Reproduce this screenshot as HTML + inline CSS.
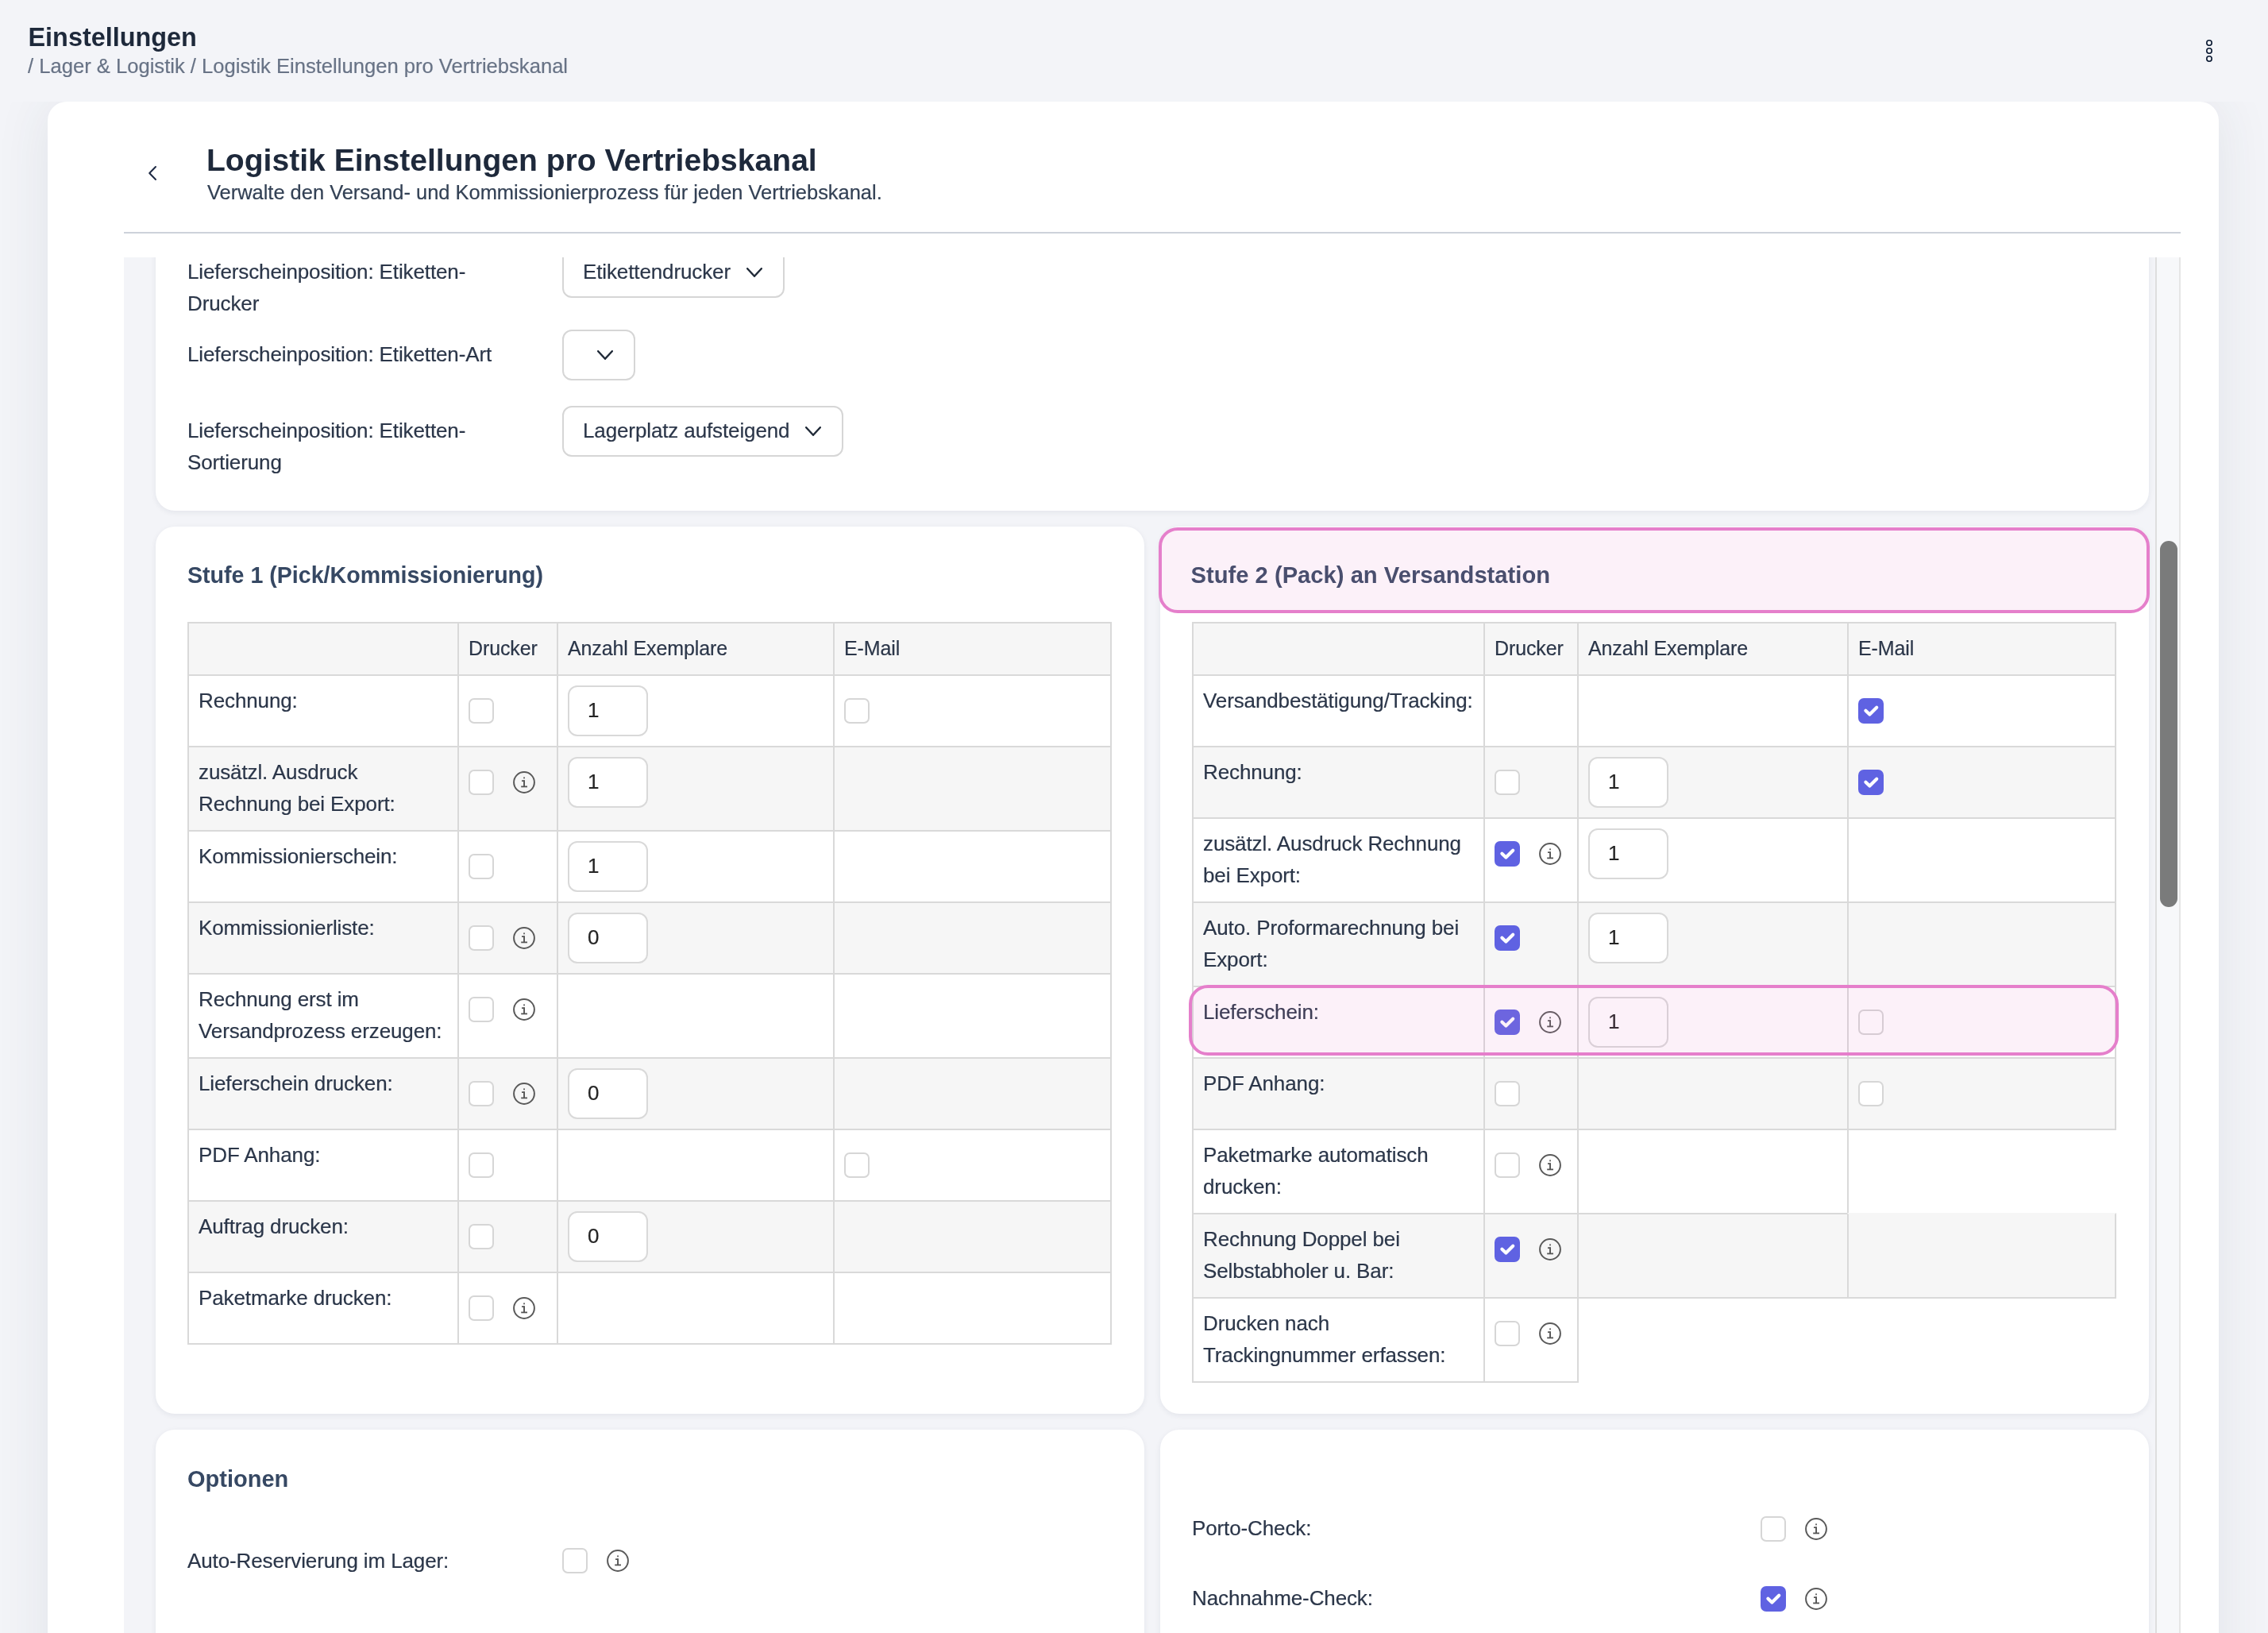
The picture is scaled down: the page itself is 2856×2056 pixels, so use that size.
<!DOCTYPE html>
<html><head><meta charset="utf-8"><title>Logistik Einstellungen</title>
<style>
html,body{margin:0;padding:0}
body{width:2856px;height:2056px;overflow:hidden;position:relative;background:#f3f4f8;font-family:"Liberation Sans", sans-serif}
.t{position:absolute;white-space:nowrap}
.a{position:absolute;display:block}
</style></head><body><div id="root" style="position:absolute;left:0;top:0;width:2856px;height:2056px;overflow:hidden;background:#f3f4f8;will-change:transform">
<div class="t" style="left:35.5px;top:25.00px;font-size:32.4px;line-height:44px;font-weight:700;color:#1e293b;">Einstellungen</div><div class="t" style="left:35px;top:65.00px;font-size:25.6px;line-height:36px;font-weight:400;color:#687386;-webkit-text-stroke:0.2px currentColor;letter-spacing:0px;">/ Lager &amp; Logistik / Logistik Einstellungen pro Vertriebskanal</div><svg class="a" style="left:2772px;top:44px" width="20" height="40" viewBox="0 0 20 40"><circle cx="10" cy="10" r="3.2" fill="none" stroke="#0b1a33" stroke-width="1.6"/><circle cx="10" cy="20" r="3.2" fill="none" stroke="#0b1a33" stroke-width="1.6"/><circle cx="10" cy="30" r="3.2" fill="none" stroke="#0b1a33" stroke-width="1.6"/></svg><div style="position:absolute;left:0;top:128px;width:2856px;height:1928px;overflow:hidden"><div style="position:absolute;left:60px;top:0;width:2734px;height:2400px;background:#fff;border-radius:24px;box-shadow:0 0 70px rgba(45,65,75,0.09)"></div></div><svg class="a" style="left:184px;top:206px" width="16" height="24" viewBox="0 0 16 24"><polyline points="12,4 4.2,12 12,20" fill="none" stroke="#1e2a44" stroke-width="2" stroke-linecap="round" stroke-linejoin="round"/></svg><div class="t" style="left:260px;top:176.50px;font-size:39.1px;line-height:50px;font-weight:700;color:#1e293b;">Logistik Einstellungen pro Vertriebskanal</div><div class="t" style="left:261px;top:224.00px;font-size:25.5px;line-height:36px;font-weight:400;color:#334155;-webkit-text-stroke:0.2px currentColor;letter-spacing:-0.03px;">Verwalte den Versand- und Kommissionierprozess für jeden Vertriebskanal.</div><div style="position:absolute;left:156px;top:292px;width:2590px;height:2px;background:#cdd2da"></div><div style="position:absolute;left:156px;top:324px;width:2590px;height:1732px;overflow:hidden;background:#f3f4f8"><div style="position:absolute;left:-156px;top:-324px;width:2856px;height:2056px"><div style="position:absolute;left:196px;top:200px;width:2510px;height:443px;background:#fff;border-radius:24px;box-shadow:0 2px 7px rgba(30,40,70,0.075)"></div><div style="position:absolute;left:196px;top:663px;width:1245px;height:1117px;background:#fff;border-radius:24px;box-shadow:0 2px 7px rgba(30,40,70,0.075)"></div><div style="position:absolute;left:1461px;top:663px;width:1245px;height:1117px;background:#fff;border-radius:24px;box-shadow:0 2px 7px rgba(30,40,70,0.075)"></div><div style="position:absolute;left:196px;top:1800px;width:1245px;height:600px;background:#fff;border-radius:24px;box-shadow:0 2px 7px rgba(30,40,70,0.075)"></div><div style="position:absolute;left:1461px;top:1800px;width:1245px;height:600px;background:#fff;border-radius:24px;box-shadow:0 2px 7px rgba(30,40,70,0.075)"></div><div class="t" style="left:236px;top:322.00px;font-size:26px;line-height:40px;font-weight:400;color:#2b3649;-webkit-text-stroke:0.2px currentColor;letter-spacing:-0.12px;">Lieferscheinposition: Etiketten-</div><div class="t" style="left:236px;top:362.00px;font-size:26px;line-height:40px;font-weight:400;color:#2b3649;-webkit-text-stroke:0.2px currentColor;letter-spacing:-0.12px;">Drucker</div><div style="position:absolute;left:708px;top:311px;width:280px;height:64px;box-sizing:border-box;border:2px solid #d6d6d6;border-radius:12px;background:#fff"></div><div class="t" style="left:734px;top:322.00px;font-size:26px;line-height:40px;font-weight:400;color:#2b3649;-webkit-text-stroke:0.2px currentColor;letter-spacing:-0.12px;">Etikettendrucker</div><svg class="a" style="left:940px;top:337px" width="20" height="12" viewBox="0 0 20 12"><polyline points="1.2,1.2 10.0,10.8 18.8,1.2" fill="none" stroke="#1f2937" stroke-width="2.4" stroke-linecap="round" stroke-linejoin="round"/></svg><div class="t" style="left:236px;top:426.00px;font-size:26px;line-height:40px;font-weight:400;color:#2b3649;-webkit-text-stroke:0.2px currentColor;letter-spacing:-0.12px;">Lieferscheinposition: Etiketten-Art</div><div style="position:absolute;left:708px;top:415px;width:92px;height:64px;box-sizing:border-box;border:2px solid #d6d6d6;border-radius:12px;background:#fff"></div><svg class="a" style="left:752px;top:441px" width="20" height="12" viewBox="0 0 20 12"><polyline points="1.2,1.2 10.0,10.8 18.8,1.2" fill="none" stroke="#1f2937" stroke-width="2.4" stroke-linecap="round" stroke-linejoin="round"/></svg><div class="t" style="left:236px;top:522.00px;font-size:26px;line-height:40px;font-weight:400;color:#2b3649;-webkit-text-stroke:0.2px currentColor;letter-spacing:-0.12px;">Lieferscheinposition: Etiketten-</div><div class="t" style="left:236px;top:562.00px;font-size:26px;line-height:40px;font-weight:400;color:#2b3649;-webkit-text-stroke:0.2px currentColor;letter-spacing:-0.12px;">Sortierung</div><div style="position:absolute;left:708px;top:511px;width:354px;height:64px;box-sizing:border-box;border:2px solid #d6d6d6;border-radius:12px;background:#fff"></div><div class="t" style="left:734px;top:522.00px;font-size:26px;line-height:40px;font-weight:400;color:#2b3649;-webkit-text-stroke:0.2px currentColor;letter-spacing:-0.12px;">Lagerplatz aufsteigend</div><svg class="a" style="left:1014px;top:537px" width="20" height="12" viewBox="0 0 20 12"><polyline points="1.2,1.2 10.0,10.8 18.8,1.2" fill="none" stroke="#1f2937" stroke-width="2.4" stroke-linecap="round" stroke-linejoin="round"/></svg><div class="t" style="left:236px;top:703.50px;font-size:28.6px;line-height:40px;font-weight:700;color:#364863;">Stufe 1 (Pick/Kommissionierung)</div><div style="position:absolute;left:236px;top:783px;width:342px;height:68px;box-sizing:border-box;border:2px solid #d9d9d9;background:#f6f6f6"></div><div style="position:absolute;left:576px;top:783px;width:127px;height:68px;box-sizing:border-box;border:2px solid #d9d9d9;background:#f6f6f6"></div><div style="position:absolute;left:701px;top:783px;width:350px;height:68px;box-sizing:border-box;border:2px solid #d9d9d9;background:#f6f6f6"></div><div style="position:absolute;left:1049px;top:783px;width:351px;height:68px;box-sizing:border-box;border:2px solid #d9d9d9;background:#f6f6f6"></div><div style="position:absolute;left:236px;top:849px;width:342px;height:92px;box-sizing:border-box;border:2px solid #d9d9d9;background:#fff"></div><div style="position:absolute;left:576px;top:849px;width:127px;height:92px;box-sizing:border-box;border:2px solid #d9d9d9;background:#fff"></div><div style="position:absolute;left:701px;top:849px;width:350px;height:92px;box-sizing:border-box;border:2px solid #d9d9d9;background:#fff"></div><div style="position:absolute;left:1049px;top:849px;width:351px;height:92px;box-sizing:border-box;border:2px solid #d9d9d9;background:#fff"></div><div style="position:absolute;left:236px;top:939px;width:342px;height:108px;box-sizing:border-box;border:2px solid #d9d9d9;background:#f6f6f6"></div><div style="position:absolute;left:576px;top:939px;width:127px;height:108px;box-sizing:border-box;border:2px solid #d9d9d9;background:#f6f6f6"></div><div style="position:absolute;left:701px;top:939px;width:350px;height:108px;box-sizing:border-box;border:2px solid #d9d9d9;background:#f6f6f6"></div><div style="position:absolute;left:1049px;top:939px;width:351px;height:108px;box-sizing:border-box;border:2px solid #d9d9d9;background:#f6f6f6"></div><div style="position:absolute;left:236px;top:1045px;width:342px;height:92px;box-sizing:border-box;border:2px solid #d9d9d9;background:#fff"></div><div style="position:absolute;left:576px;top:1045px;width:127px;height:92px;box-sizing:border-box;border:2px solid #d9d9d9;background:#fff"></div><div style="position:absolute;left:701px;top:1045px;width:350px;height:92px;box-sizing:border-box;border:2px solid #d9d9d9;background:#fff"></div><div style="position:absolute;left:1049px;top:1045px;width:351px;height:92px;box-sizing:border-box;border:2px solid #d9d9d9;background:#fff"></div><div style="position:absolute;left:236px;top:1135px;width:342px;height:92px;box-sizing:border-box;border:2px solid #d9d9d9;background:#f6f6f6"></div><div style="position:absolute;left:576px;top:1135px;width:127px;height:92px;box-sizing:border-box;border:2px solid #d9d9d9;background:#f6f6f6"></div><div style="position:absolute;left:701px;top:1135px;width:350px;height:92px;box-sizing:border-box;border:2px solid #d9d9d9;background:#f6f6f6"></div><div style="position:absolute;left:1049px;top:1135px;width:351px;height:92px;box-sizing:border-box;border:2px solid #d9d9d9;background:#f6f6f6"></div><div style="position:absolute;left:236px;top:1225px;width:342px;height:108px;box-sizing:border-box;border:2px solid #d9d9d9;background:#fff"></div><div style="position:absolute;left:576px;top:1225px;width:127px;height:108px;box-sizing:border-box;border:2px solid #d9d9d9;background:#fff"></div><div style="position:absolute;left:701px;top:1225px;width:350px;height:108px;box-sizing:border-box;border:2px solid #d9d9d9;background:#fff"></div><div style="position:absolute;left:1049px;top:1225px;width:351px;height:108px;box-sizing:border-box;border:2px solid #d9d9d9;background:#fff"></div><div style="position:absolute;left:236px;top:1331px;width:342px;height:92px;box-sizing:border-box;border:2px solid #d9d9d9;background:#f6f6f6"></div><div style="position:absolute;left:576px;top:1331px;width:127px;height:92px;box-sizing:border-box;border:2px solid #d9d9d9;background:#f6f6f6"></div><div style="position:absolute;left:701px;top:1331px;width:350px;height:92px;box-sizing:border-box;border:2px solid #d9d9d9;background:#f6f6f6"></div><div style="position:absolute;left:1049px;top:1331px;width:351px;height:92px;box-sizing:border-box;border:2px solid #d9d9d9;background:#f6f6f6"></div><div style="position:absolute;left:236px;top:1421px;width:342px;height:92px;box-sizing:border-box;border:2px solid #d9d9d9;background:#fff"></div><div style="position:absolute;left:576px;top:1421px;width:127px;height:92px;box-sizing:border-box;border:2px solid #d9d9d9;background:#fff"></div><div style="position:absolute;left:701px;top:1421px;width:350px;height:92px;box-sizing:border-box;border:2px solid #d9d9d9;background:#fff"></div><div style="position:absolute;left:1049px;top:1421px;width:351px;height:92px;box-sizing:border-box;border:2px solid #d9d9d9;background:#fff"></div><div style="position:absolute;left:236px;top:1511px;width:342px;height:92px;box-sizing:border-box;border:2px solid #d9d9d9;background:#f6f6f6"></div><div style="position:absolute;left:576px;top:1511px;width:127px;height:92px;box-sizing:border-box;border:2px solid #d9d9d9;background:#f6f6f6"></div><div style="position:absolute;left:701px;top:1511px;width:350px;height:92px;box-sizing:border-box;border:2px solid #d9d9d9;background:#f6f6f6"></div><div style="position:absolute;left:1049px;top:1511px;width:351px;height:92px;box-sizing:border-box;border:2px solid #d9d9d9;background:#f6f6f6"></div><div style="position:absolute;left:236px;top:1601px;width:342px;height:92px;box-sizing:border-box;border:2px solid #d9d9d9;background:#fff"></div><div style="position:absolute;left:576px;top:1601px;width:127px;height:92px;box-sizing:border-box;border:2px solid #d9d9d9;background:#fff"></div><div style="position:absolute;left:701px;top:1601px;width:350px;height:92px;box-sizing:border-box;border:2px solid #d9d9d9;background:#fff"></div><div style="position:absolute;left:1049px;top:1601px;width:351px;height:92px;box-sizing:border-box;border:2px solid #d9d9d9;background:#fff"></div><div class="t" style="left:590px;top:796.00px;font-size:25px;line-height:40px;font-weight:400;color:#2b3649;-webkit-text-stroke:0.2px currentColor;letter-spacing:-0.12px;">Drucker</div><div class="t" style="left:715px;top:796.00px;font-size:25px;line-height:40px;font-weight:400;color:#2b3649;-webkit-text-stroke:0.2px currentColor;letter-spacing:-0.12px;">Anzahl Exemplare</div><div class="t" style="left:1063px;top:796.00px;font-size:25px;line-height:40px;font-weight:400;color:#2b3649;-webkit-text-stroke:0.2px currentColor;letter-spacing:-0.12px;">E-Mail</div><div class="t" style="left:250px;top:862.00px;font-size:26px;line-height:40px;font-weight:400;color:#2b3649;-webkit-text-stroke:0.2px currentColor;letter-spacing:-0.12px;">Rechnung:</div><div style="position:absolute;left:590px;top:879px;width:32px;height:32px;box-sizing:border-box;border:2px solid #d6d6d6;border-radius:7px;background:#fff"></div><div style="position:absolute;left:715px;top:863px;width:101px;height:64px;box-sizing:border-box;border:2px solid #d9d9d9;border-radius:12px;background:#fff"></div><div class="t" style="left:740px;top:874.00px;font-size:26px;line-height:40px;font-weight:400;color:#242424;-webkit-text-stroke:0.2px currentColor;letter-spacing:-0.12px;">1</div><div style="position:absolute;left:1063px;top:879px;width:32px;height:32px;box-sizing:border-box;border:2px solid #d6d6d6;border-radius:7px;background:#fff"></div><div class="t" style="left:250px;top:952.00px;font-size:26px;line-height:40px;font-weight:400;color:#2b3649;-webkit-text-stroke:0.2px currentColor;letter-spacing:-0.12px;">zusätzl. Ausdruck</div><div class="t" style="left:250px;top:992.00px;font-size:26px;line-height:40px;font-weight:400;color:#2b3649;-webkit-text-stroke:0.2px currentColor;letter-spacing:-0.12px;">Rechnung bei Export:</div><div style="position:absolute;left:590px;top:969px;width:32px;height:32px;box-sizing:border-box;border:2px solid #d6d6d6;border-radius:7px;background:#fff"></div><svg class="a" style="left:646px;top:971px" width="28" height="28" viewBox="0 0 28 28"><circle cx="14" cy="14" r="12.9" fill="none" stroke="#5a5a5a" stroke-width="2"/><rect x="13.1" y="7.4" width="1.9" height="1.9" fill="#666"/><rect x="13.1" y="11.3" width="1.9" height="8.6" fill="#555"/><rect x="11" y="11.3" width="3.5" height="1.7" fill="#555"/><rect x="10.2" y="18.5" width="7.8" height="1.8" fill="#555"/></svg><div style="position:absolute;left:715px;top:953px;width:101px;height:64px;box-sizing:border-box;border:2px solid #d9d9d9;border-radius:12px;background:#fff"></div><div class="t" style="left:740px;top:964.00px;font-size:26px;line-height:40px;font-weight:400;color:#242424;-webkit-text-stroke:0.2px currentColor;letter-spacing:-0.12px;">1</div><div class="t" style="left:250px;top:1058.00px;font-size:26px;line-height:40px;font-weight:400;color:#2b3649;-webkit-text-stroke:0.2px currentColor;letter-spacing:-0.12px;">Kommissionierschein:</div><div style="position:absolute;left:590px;top:1075px;width:32px;height:32px;box-sizing:border-box;border:2px solid #d6d6d6;border-radius:7px;background:#fff"></div><div style="position:absolute;left:715px;top:1059px;width:101px;height:64px;box-sizing:border-box;border:2px solid #d9d9d9;border-radius:12px;background:#fff"></div><div class="t" style="left:740px;top:1070.00px;font-size:26px;line-height:40px;font-weight:400;color:#242424;-webkit-text-stroke:0.2px currentColor;letter-spacing:-0.12px;">1</div><div class="t" style="left:250px;top:1148.00px;font-size:26px;line-height:40px;font-weight:400;color:#2b3649;-webkit-text-stroke:0.2px currentColor;letter-spacing:-0.12px;">Kommissionierliste:</div><div style="position:absolute;left:590px;top:1165px;width:32px;height:32px;box-sizing:border-box;border:2px solid #d6d6d6;border-radius:7px;background:#fff"></div><svg class="a" style="left:646px;top:1167px" width="28" height="28" viewBox="0 0 28 28"><circle cx="14" cy="14" r="12.9" fill="none" stroke="#5a5a5a" stroke-width="2"/><rect x="13.1" y="7.4" width="1.9" height="1.9" fill="#666"/><rect x="13.1" y="11.3" width="1.9" height="8.6" fill="#555"/><rect x="11" y="11.3" width="3.5" height="1.7" fill="#555"/><rect x="10.2" y="18.5" width="7.8" height="1.8" fill="#555"/></svg><div style="position:absolute;left:715px;top:1149px;width:101px;height:64px;box-sizing:border-box;border:2px solid #d9d9d9;border-radius:12px;background:#fff"></div><div class="t" style="left:740px;top:1160.00px;font-size:26px;line-height:40px;font-weight:400;color:#242424;-webkit-text-stroke:0.2px currentColor;letter-spacing:-0.12px;">0</div><div class="t" style="left:250px;top:1238.00px;font-size:26px;line-height:40px;font-weight:400;color:#2b3649;-webkit-text-stroke:0.2px currentColor;letter-spacing:-0.12px;">Rechnung erst im</div><div class="t" style="left:250px;top:1278.00px;font-size:26px;line-height:40px;font-weight:400;color:#2b3649;-webkit-text-stroke:0.2px currentColor;letter-spacing:-0.12px;">Versandprozess erzeugen:</div><div style="position:absolute;left:590px;top:1255px;width:32px;height:32px;box-sizing:border-box;border:2px solid #d6d6d6;border-radius:7px;background:#fff"></div><svg class="a" style="left:646px;top:1257px" width="28" height="28" viewBox="0 0 28 28"><circle cx="14" cy="14" r="12.9" fill="none" stroke="#5a5a5a" stroke-width="2"/><rect x="13.1" y="7.4" width="1.9" height="1.9" fill="#666"/><rect x="13.1" y="11.3" width="1.9" height="8.6" fill="#555"/><rect x="11" y="11.3" width="3.5" height="1.7" fill="#555"/><rect x="10.2" y="18.5" width="7.8" height="1.8" fill="#555"/></svg><div class="t" style="left:250px;top:1344.00px;font-size:26px;line-height:40px;font-weight:400;color:#2b3649;-webkit-text-stroke:0.2px currentColor;letter-spacing:-0.12px;">Lieferschein drucken:</div><div style="position:absolute;left:590px;top:1361px;width:32px;height:32px;box-sizing:border-box;border:2px solid #d6d6d6;border-radius:7px;background:#fff"></div><svg class="a" style="left:646px;top:1363px" width="28" height="28" viewBox="0 0 28 28"><circle cx="14" cy="14" r="12.9" fill="none" stroke="#5a5a5a" stroke-width="2"/><rect x="13.1" y="7.4" width="1.9" height="1.9" fill="#666"/><rect x="13.1" y="11.3" width="1.9" height="8.6" fill="#555"/><rect x="11" y="11.3" width="3.5" height="1.7" fill="#555"/><rect x="10.2" y="18.5" width="7.8" height="1.8" fill="#555"/></svg><div style="position:absolute;left:715px;top:1345px;width:101px;height:64px;box-sizing:border-box;border:2px solid #d9d9d9;border-radius:12px;background:#fff"></div><div class="t" style="left:740px;top:1356.00px;font-size:26px;line-height:40px;font-weight:400;color:#242424;-webkit-text-stroke:0.2px currentColor;letter-spacing:-0.12px;">0</div><div class="t" style="left:250px;top:1434.00px;font-size:26px;line-height:40px;font-weight:400;color:#2b3649;-webkit-text-stroke:0.2px currentColor;letter-spacing:-0.12px;">PDF Anhang:</div><div style="position:absolute;left:590px;top:1451px;width:32px;height:32px;box-sizing:border-box;border:2px solid #d6d6d6;border-radius:7px;background:#fff"></div><div style="position:absolute;left:1063px;top:1451px;width:32px;height:32px;box-sizing:border-box;border:2px solid #d6d6d6;border-radius:7px;background:#fff"></div><div class="t" style="left:250px;top:1524.00px;font-size:26px;line-height:40px;font-weight:400;color:#2b3649;-webkit-text-stroke:0.2px currentColor;letter-spacing:-0.12px;">Auftrag drucken:</div><div style="position:absolute;left:590px;top:1541px;width:32px;height:32px;box-sizing:border-box;border:2px solid #d6d6d6;border-radius:7px;background:#fff"></div><div style="position:absolute;left:715px;top:1525px;width:101px;height:64px;box-sizing:border-box;border:2px solid #d9d9d9;border-radius:12px;background:#fff"></div><div class="t" style="left:740px;top:1536.00px;font-size:26px;line-height:40px;font-weight:400;color:#242424;-webkit-text-stroke:0.2px currentColor;letter-spacing:-0.12px;">0</div><div class="t" style="left:250px;top:1614.00px;font-size:26px;line-height:40px;font-weight:400;color:#2b3649;-webkit-text-stroke:0.2px currentColor;letter-spacing:-0.12px;">Paketmarke drucken:</div><div style="position:absolute;left:590px;top:1631px;width:32px;height:32px;box-sizing:border-box;border:2px solid #d6d6d6;border-radius:7px;background:#fff"></div><svg class="a" style="left:646px;top:1633px" width="28" height="28" viewBox="0 0 28 28"><circle cx="14" cy="14" r="12.9" fill="none" stroke="#5a5a5a" stroke-width="2"/><rect x="13.1" y="7.4" width="1.9" height="1.9" fill="#666"/><rect x="13.1" y="11.3" width="1.9" height="8.6" fill="#555"/><rect x="11" y="11.3" width="3.5" height="1.7" fill="#555"/><rect x="10.2" y="18.5" width="7.8" height="1.8" fill="#555"/></svg><div class="t" style="left:1499.5px;top:703.50px;font-size:29.2px;line-height:40px;font-weight:700;color:#364863;">Stufe 2 (Pack) an Versandstation</div><div style="position:absolute;left:1501px;top:783px;width:369px;height:68px;box-sizing:border-box;border:2px solid #d9d9d9;background:#f6f6f6"></div><div style="position:absolute;left:1868px;top:783px;width:120px;height:68px;box-sizing:border-box;border:2px solid #d9d9d9;background:#f6f6f6"></div><div style="position:absolute;left:1986px;top:783px;width:342px;height:68px;box-sizing:border-box;border:2px solid #d9d9d9;background:#f6f6f6"></div><div style="position:absolute;left:2326px;top:783px;width:339px;height:68px;box-sizing:border-box;border:2px solid #d9d9d9;background:#f6f6f6"></div><div style="position:absolute;left:1501px;top:849px;width:369px;height:92px;box-sizing:border-box;border:2px solid #d9d9d9;background:#fff"></div><div style="position:absolute;left:1868px;top:849px;width:120px;height:92px;box-sizing:border-box;border:2px solid #d9d9d9;background:#fff"></div><div style="position:absolute;left:1986px;top:849px;width:342px;height:92px;box-sizing:border-box;border:2px solid #d9d9d9;background:#fff"></div><div style="position:absolute;left:2326px;top:849px;width:339px;height:92px;box-sizing:border-box;border:2px solid #d9d9d9;background:#fff"></div><div style="position:absolute;left:1501px;top:939px;width:369px;height:92px;box-sizing:border-box;border:2px solid #d9d9d9;background:#f6f6f6"></div><div style="position:absolute;left:1868px;top:939px;width:120px;height:92px;box-sizing:border-box;border:2px solid #d9d9d9;background:#f6f6f6"></div><div style="position:absolute;left:1986px;top:939px;width:342px;height:92px;box-sizing:border-box;border:2px solid #d9d9d9;background:#f6f6f6"></div><div style="position:absolute;left:2326px;top:939px;width:339px;height:92px;box-sizing:border-box;border:2px solid #d9d9d9;background:#f6f6f6"></div><div style="position:absolute;left:1501px;top:1029px;width:369px;height:108px;box-sizing:border-box;border:2px solid #d9d9d9;background:#fff"></div><div style="position:absolute;left:1868px;top:1029px;width:120px;height:108px;box-sizing:border-box;border:2px solid #d9d9d9;background:#fff"></div><div style="position:absolute;left:1986px;top:1029px;width:342px;height:108px;box-sizing:border-box;border:2px solid #d9d9d9;background:#fff"></div><div style="position:absolute;left:2326px;top:1029px;width:339px;height:108px;box-sizing:border-box;border:2px solid #d9d9d9;background:#fff"></div><div style="position:absolute;left:1501px;top:1135px;width:369px;height:108px;box-sizing:border-box;border:2px solid #d9d9d9;background:#f6f6f6"></div><div style="position:absolute;left:1868px;top:1135px;width:120px;height:108px;box-sizing:border-box;border:2px solid #d9d9d9;background:#f6f6f6"></div><div style="position:absolute;left:1986px;top:1135px;width:342px;height:108px;box-sizing:border-box;border:2px solid #d9d9d9;background:#f6f6f6"></div><div style="position:absolute;left:2326px;top:1135px;width:339px;height:108px;box-sizing:border-box;border:2px solid #d9d9d9;background:#f6f6f6"></div><div style="position:absolute;left:1501px;top:1241px;width:369px;height:92px;box-sizing:border-box;border:2px solid #d9d9d9;background:#fff"></div><div style="position:absolute;left:1868px;top:1241px;width:120px;height:92px;box-sizing:border-box;border:2px solid #d9d9d9;background:#fff"></div><div style="position:absolute;left:1986px;top:1241px;width:342px;height:92px;box-sizing:border-box;border:2px solid #d9d9d9;background:#fff"></div><div style="position:absolute;left:2326px;top:1241px;width:339px;height:92px;box-sizing:border-box;border:2px solid #d9d9d9;background:#fff"></div><div style="position:absolute;left:1501px;top:1331px;width:369px;height:92px;box-sizing:border-box;border:2px solid #d9d9d9;background:#f6f6f6"></div><div style="position:absolute;left:1868px;top:1331px;width:120px;height:92px;box-sizing:border-box;border:2px solid #d9d9d9;background:#f6f6f6"></div><div style="position:absolute;left:1986px;top:1331px;width:342px;height:92px;box-sizing:border-box;border:2px solid #d9d9d9;background:#f6f6f6"></div><div style="position:absolute;left:2326px;top:1331px;width:339px;height:92px;box-sizing:border-box;border:2px solid #d9d9d9;background:#f6f6f6"></div><div style="position:absolute;left:1501px;top:1421px;width:369px;height:108px;box-sizing:border-box;border:2px solid #d9d9d9;background:#fff"></div><div style="position:absolute;left:1868px;top:1421px;width:120px;height:108px;box-sizing:border-box;border:2px solid #d9d9d9;background:#fff"></div><div style="position:absolute;left:1986px;top:1421px;width:342px;height:108px;box-sizing:border-box;border:2px solid #d9d9d9;background:#fff"></div><div style="position:absolute;left:1501px;top:1527px;width:369px;height:108px;box-sizing:border-box;border:2px solid #d9d9d9;background:#f6f6f6"></div><div style="position:absolute;left:1868px;top:1527px;width:120px;height:108px;box-sizing:border-box;border:2px solid #d9d9d9;background:#f6f6f6"></div><div style="position:absolute;left:1986px;top:1527px;width:342px;height:108px;box-sizing:border-box;border:2px solid #d9d9d9;background:#f6f6f6"></div><div style="position:absolute;left:2326px;top:1527px;width:339px;height:108px;box-sizing:border-box;border:2px solid #d9d9d9;border-top-color:transparent;background:#f6f6f6"></div><div style="position:absolute;left:1501px;top:1633px;width:369px;height:108px;box-sizing:border-box;border:2px solid #d9d9d9;background:#fff"></div><div style="position:absolute;left:1868px;top:1633px;width:120px;height:108px;box-sizing:border-box;border:2px solid #d9d9d9;background:#fff"></div><div class="t" style="left:1882px;top:796.00px;font-size:25px;line-height:40px;font-weight:400;color:#2b3649;-webkit-text-stroke:0.2px currentColor;letter-spacing:-0.12px;">Drucker</div><div class="t" style="left:2000px;top:796.00px;font-size:25px;line-height:40px;font-weight:400;color:#2b3649;-webkit-text-stroke:0.2px currentColor;letter-spacing:-0.12px;">Anzahl Exemplare</div><div class="t" style="left:2340px;top:796.00px;font-size:25px;line-height:40px;font-weight:400;color:#2b3649;-webkit-text-stroke:0.2px currentColor;letter-spacing:-0.12px;">E-Mail</div><div class="t" style="left:1515px;top:862.00px;font-size:26px;line-height:40px;font-weight:400;color:#2b3649;-webkit-text-stroke:0.2px currentColor;letter-spacing:-0.12px;">Versandbestätigung/Tracking:</div><svg class="a" style="left:2340px;top:879px" width="32" height="32" viewBox="0 0 32 32"><rect x="0" y="0" width="32" height="32" rx="7" fill="#5f62e2"/><polyline points="9.4,15.8 14.4,20.5 23.2,11.8" fill="none" stroke="#fff" stroke-width="4.2" stroke-linecap="round" stroke-linejoin="round"/></svg><div class="t" style="left:1515px;top:952.00px;font-size:26px;line-height:40px;font-weight:400;color:#2b3649;-webkit-text-stroke:0.2px currentColor;letter-spacing:-0.12px;">Rechnung:</div><div style="position:absolute;left:1882px;top:969px;width:32px;height:32px;box-sizing:border-box;border:2px solid #d6d6d6;border-radius:7px;background:#fff"></div><div style="position:absolute;left:2000px;top:953px;width:101px;height:64px;box-sizing:border-box;border:2px solid #d9d9d9;border-radius:12px;background:#fff"></div><div class="t" style="left:2025px;top:964.00px;font-size:26px;line-height:40px;font-weight:400;color:#242424;-webkit-text-stroke:0.2px currentColor;letter-spacing:-0.12px;">1</div><svg class="a" style="left:2340px;top:969px" width="32" height="32" viewBox="0 0 32 32"><rect x="0" y="0" width="32" height="32" rx="7" fill="#5f62e2"/><polyline points="9.4,15.8 14.4,20.5 23.2,11.8" fill="none" stroke="#fff" stroke-width="4.2" stroke-linecap="round" stroke-linejoin="round"/></svg><div class="t" style="left:1515px;top:1042.00px;font-size:26px;line-height:40px;font-weight:400;color:#2b3649;-webkit-text-stroke:0.2px currentColor;letter-spacing:-0.12px;">zusätzl. Ausdruck Rechnung</div><div class="t" style="left:1515px;top:1082.00px;font-size:26px;line-height:40px;font-weight:400;color:#2b3649;-webkit-text-stroke:0.2px currentColor;letter-spacing:-0.12px;">bei Export:</div><svg class="a" style="left:1882px;top:1059px" width="32" height="32" viewBox="0 0 32 32"><rect x="0" y="0" width="32" height="32" rx="7" fill="#5f62e2"/><polyline points="9.4,15.8 14.4,20.5 23.2,11.8" fill="none" stroke="#fff" stroke-width="4.2" stroke-linecap="round" stroke-linejoin="round"/></svg><svg class="a" style="left:1938px;top:1061px" width="28" height="28" viewBox="0 0 28 28"><circle cx="14" cy="14" r="12.9" fill="none" stroke="#5a5a5a" stroke-width="2"/><rect x="13.1" y="7.4" width="1.9" height="1.9" fill="#666"/><rect x="13.1" y="11.3" width="1.9" height="8.6" fill="#555"/><rect x="11" y="11.3" width="3.5" height="1.7" fill="#555"/><rect x="10.2" y="18.5" width="7.8" height="1.8" fill="#555"/></svg><div style="position:absolute;left:2000px;top:1043px;width:101px;height:64px;box-sizing:border-box;border:2px solid #d9d9d9;border-radius:12px;background:#fff"></div><div class="t" style="left:2025px;top:1054.00px;font-size:26px;line-height:40px;font-weight:400;color:#242424;-webkit-text-stroke:0.2px currentColor;letter-spacing:-0.12px;">1</div><div class="t" style="left:1515px;top:1148.00px;font-size:26px;line-height:40px;font-weight:400;color:#2b3649;-webkit-text-stroke:0.2px currentColor;letter-spacing:-0.12px;">Auto. Proformarechnung bei</div><div class="t" style="left:1515px;top:1188.00px;font-size:26px;line-height:40px;font-weight:400;color:#2b3649;-webkit-text-stroke:0.2px currentColor;letter-spacing:-0.12px;">Export:</div><svg class="a" style="left:1882px;top:1165px" width="32" height="32" viewBox="0 0 32 32"><rect x="0" y="0" width="32" height="32" rx="7" fill="#5f62e2"/><polyline points="9.4,15.8 14.4,20.5 23.2,11.8" fill="none" stroke="#fff" stroke-width="4.2" stroke-linecap="round" stroke-linejoin="round"/></svg><div style="position:absolute;left:2000px;top:1149px;width:101px;height:64px;box-sizing:border-box;border:2px solid #d9d9d9;border-radius:12px;background:#fff"></div><div class="t" style="left:2025px;top:1160.00px;font-size:26px;line-height:40px;font-weight:400;color:#242424;-webkit-text-stroke:0.2px currentColor;letter-spacing:-0.12px;">1</div><div class="t" style="left:1515px;top:1254.00px;font-size:26px;line-height:40px;font-weight:400;color:#2b3649;-webkit-text-stroke:0.2px currentColor;letter-spacing:-0.12px;">Lieferschein:</div><svg class="a" style="left:1882px;top:1271px" width="32" height="32" viewBox="0 0 32 32"><rect x="0" y="0" width="32" height="32" rx="7" fill="#5f62e2"/><polyline points="9.4,15.8 14.4,20.5 23.2,11.8" fill="none" stroke="#fff" stroke-width="4.2" stroke-linecap="round" stroke-linejoin="round"/></svg><svg class="a" style="left:1938px;top:1273px" width="28" height="28" viewBox="0 0 28 28"><circle cx="14" cy="14" r="12.9" fill="none" stroke="#5a5a5a" stroke-width="2"/><rect x="13.1" y="7.4" width="1.9" height="1.9" fill="#666"/><rect x="13.1" y="11.3" width="1.9" height="8.6" fill="#555"/><rect x="11" y="11.3" width="3.5" height="1.7" fill="#555"/><rect x="10.2" y="18.5" width="7.8" height="1.8" fill="#555"/></svg><div style="position:absolute;left:2000px;top:1255px;width:101px;height:64px;box-sizing:border-box;border:2px solid #d9d9d9;border-radius:12px;background:#fff"></div><div class="t" style="left:2025px;top:1266.00px;font-size:26px;line-height:40px;font-weight:400;color:#242424;-webkit-text-stroke:0.2px currentColor;letter-spacing:-0.12px;">1</div><div style="position:absolute;left:2340px;top:1271px;width:32px;height:32px;box-sizing:border-box;border:2px solid #d6d6d6;border-radius:7px;background:#fff"></div><div class="t" style="left:1515px;top:1344.00px;font-size:26px;line-height:40px;font-weight:400;color:#2b3649;-webkit-text-stroke:0.2px currentColor;letter-spacing:-0.12px;">PDF Anhang:</div><div style="position:absolute;left:1882px;top:1361px;width:32px;height:32px;box-sizing:border-box;border:2px solid #d6d6d6;border-radius:7px;background:#fff"></div><div style="position:absolute;left:2340px;top:1361px;width:32px;height:32px;box-sizing:border-box;border:2px solid #d6d6d6;border-radius:7px;background:#fff"></div><div class="t" style="left:1515px;top:1434.00px;font-size:26px;line-height:40px;font-weight:400;color:#2b3649;-webkit-text-stroke:0.2px currentColor;letter-spacing:-0.12px;">Paketmarke automatisch</div><div class="t" style="left:1515px;top:1474.00px;font-size:26px;line-height:40px;font-weight:400;color:#2b3649;-webkit-text-stroke:0.2px currentColor;letter-spacing:-0.12px;">drucken:</div><div style="position:absolute;left:1882px;top:1451px;width:32px;height:32px;box-sizing:border-box;border:2px solid #d6d6d6;border-radius:7px;background:#fff"></div><svg class="a" style="left:1938px;top:1453px" width="28" height="28" viewBox="0 0 28 28"><circle cx="14" cy="14" r="12.9" fill="none" stroke="#5a5a5a" stroke-width="2"/><rect x="13.1" y="7.4" width="1.9" height="1.9" fill="#666"/><rect x="13.1" y="11.3" width="1.9" height="8.6" fill="#555"/><rect x="11" y="11.3" width="3.5" height="1.7" fill="#555"/><rect x="10.2" y="18.5" width="7.8" height="1.8" fill="#555"/></svg><div class="t" style="left:1515px;top:1540.00px;font-size:26px;line-height:40px;font-weight:400;color:#2b3649;-webkit-text-stroke:0.2px currentColor;letter-spacing:-0.12px;">Rechnung Doppel bei</div><div class="t" style="left:1515px;top:1580.00px;font-size:26px;line-height:40px;font-weight:400;color:#2b3649;-webkit-text-stroke:0.2px currentColor;letter-spacing:-0.12px;">Selbstabholer u. Bar:</div><svg class="a" style="left:1882px;top:1557px" width="32" height="32" viewBox="0 0 32 32"><rect x="0" y="0" width="32" height="32" rx="7" fill="#5f62e2"/><polyline points="9.4,15.8 14.4,20.5 23.2,11.8" fill="none" stroke="#fff" stroke-width="4.2" stroke-linecap="round" stroke-linejoin="round"/></svg><svg class="a" style="left:1938px;top:1559px" width="28" height="28" viewBox="0 0 28 28"><circle cx="14" cy="14" r="12.9" fill="none" stroke="#5a5a5a" stroke-width="2"/><rect x="13.1" y="7.4" width="1.9" height="1.9" fill="#666"/><rect x="13.1" y="11.3" width="1.9" height="8.6" fill="#555"/><rect x="11" y="11.3" width="3.5" height="1.7" fill="#555"/><rect x="10.2" y="18.5" width="7.8" height="1.8" fill="#555"/></svg><div class="t" style="left:1515px;top:1646.00px;font-size:26px;line-height:40px;font-weight:400;color:#2b3649;-webkit-text-stroke:0.2px currentColor;letter-spacing:-0.12px;">Drucken nach</div><div class="t" style="left:1515px;top:1686.00px;font-size:26px;line-height:40px;font-weight:400;color:#2b3649;-webkit-text-stroke:0.2px currentColor;letter-spacing:-0.12px;">Trackingnummer erfassen:</div><div style="position:absolute;left:1882px;top:1663px;width:32px;height:32px;box-sizing:border-box;border:2px solid #d6d6d6;border-radius:7px;background:#fff"></div><svg class="a" style="left:1938px;top:1665px" width="28" height="28" viewBox="0 0 28 28"><circle cx="14" cy="14" r="12.9" fill="none" stroke="#5a5a5a" stroke-width="2"/><rect x="13.1" y="7.4" width="1.9" height="1.9" fill="#666"/><rect x="13.1" y="11.3" width="1.9" height="8.6" fill="#555"/><rect x="11" y="11.3" width="3.5" height="1.7" fill="#555"/><rect x="10.2" y="18.5" width="7.8" height="1.8" fill="#555"/></svg><div style="position:absolute;left:1459px;top:664px;width:1248px;height:108px;box-sizing:border-box;border:4px solid #e57fcb;border-radius:24px;background:rgba(229,127,203,0.11)"></div><div style="position:absolute;left:1497px;top:1240px;width:1171px;height:89px;box-sizing:border-box;border:4px solid #e57fcb;border-radius:24px;background:rgba(229,127,203,0.11)"></div><div class="t" style="left:236px;top:1841.50px;font-size:29px;line-height:40px;font-weight:700;color:#364863;">Optionen</div><div class="t" style="left:236px;top:1944.50px;font-size:26px;line-height:40px;font-weight:400;color:#2b3649;-webkit-text-stroke:0.2px currentColor;letter-spacing:-0.12px;">Auto-Reservierung im Lager:</div><div style="position:absolute;left:708px;top:1949px;width:32px;height:32px;box-sizing:border-box;border:2px solid #d6d6d6;border-radius:7px;background:#fff"></div><svg class="a" style="left:764px;top:1951px" width="28" height="28" viewBox="0 0 28 28"><circle cx="14" cy="14" r="12.9" fill="none" stroke="#5a5a5a" stroke-width="2"/><rect x="13.1" y="7.4" width="1.9" height="1.9" fill="#666"/><rect x="13.1" y="11.3" width="1.9" height="8.6" fill="#555"/><rect x="11" y="11.3" width="3.5" height="1.7" fill="#555"/><rect x="10.2" y="18.5" width="7.8" height="1.8" fill="#555"/></svg><div class="t" style="left:1501px;top:1904.00px;font-size:26px;line-height:40px;font-weight:400;color:#2b3649;-webkit-text-stroke:0.2px currentColor;letter-spacing:-0.12px;">Porto-Check:</div><div style="position:absolute;left:2217px;top:1909px;width:32px;height:32px;box-sizing:border-box;border:2px solid #d6d6d6;border-radius:7px;background:#fff"></div><svg class="a" style="left:2273px;top:1911px" width="28" height="28" viewBox="0 0 28 28"><circle cx="14" cy="14" r="12.9" fill="none" stroke="#5a5a5a" stroke-width="2"/><rect x="13.1" y="7.4" width="1.9" height="1.9" fill="#666"/><rect x="13.1" y="11.3" width="1.9" height="8.6" fill="#555"/><rect x="11" y="11.3" width="3.5" height="1.7" fill="#555"/><rect x="10.2" y="18.5" width="7.8" height="1.8" fill="#555"/></svg><div class="t" style="left:1501px;top:1992.00px;font-size:26px;line-height:40px;font-weight:400;color:#2b3649;-webkit-text-stroke:0.2px currentColor;letter-spacing:-0.12px;">Nachnahme-Check:</div><svg class="a" style="left:2217px;top:1997px" width="32" height="32" viewBox="0 0 32 32"><rect x="0" y="0" width="32" height="32" rx="7" fill="#5f62e2"/><polyline points="9.4,15.8 14.4,20.5 23.2,11.8" fill="none" stroke="#fff" stroke-width="4.2" stroke-linecap="round" stroke-linejoin="round"/></svg><svg class="a" style="left:2273px;top:1999px" width="28" height="28" viewBox="0 0 28 28"><circle cx="14" cy="14" r="12.9" fill="none" stroke="#5a5a5a" stroke-width="2"/><rect x="13.1" y="7.4" width="1.9" height="1.9" fill="#666"/><rect x="13.1" y="11.3" width="1.9" height="8.6" fill="#555"/><rect x="11" y="11.3" width="3.5" height="1.7" fill="#555"/><rect x="10.2" y="18.5" width="7.8" height="1.8" fill="#555"/></svg></div></div><div style="position:absolute;left:2714px;top:324px;width:2px;height:1732px;background:#dedede"></div><div style="position:absolute;left:2716px;top:324px;width:28px;height:1732px;background:#f7f8fa"></div><div style="position:absolute;left:2744px;top:324px;width:2px;height:1732px;background:#e6e6e6"></div><div style="position:absolute;left:2720px;top:681px;width:22px;height:461px;background:#7a7b7b;border-radius:11px"></div>
</div></body></html>
